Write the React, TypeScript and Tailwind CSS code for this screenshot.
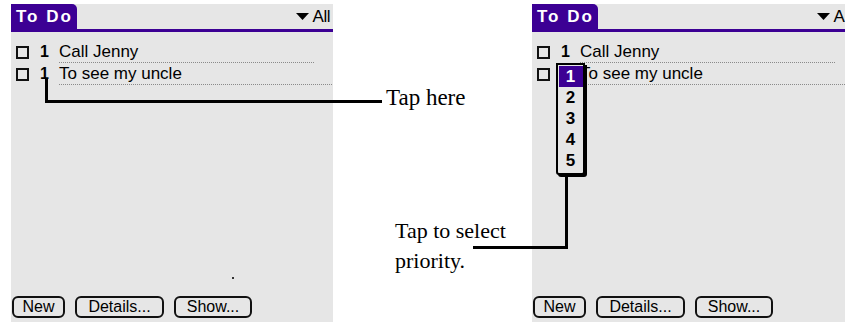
import type { ReactNode } from 'react';

const palmFont = "font-['Liberation_Sans',Arial,sans-serif]";
const serifFont = "font-['Liberation_Serif','Times_New_Roman',serif]";

type Task = { priority: string; text: string; lineTo: string };

const tasks: Task[] = [
  { priority: '1', text: 'Call Jenny', lineTo: 'w-[255px]' },
  { priority: '1', text: 'To see my uncle', lineTo: 'w-[273px]' },
];

function PalmButton({ children, width }: { children: ReactNode; width: string }) {
  return (
    <div
      className={`flex h-[22px] ${width} items-center justify-center rounded-[6px] border-2 border-[#111] text-[16px] leading-none text-black`}
    >
      {children}
    </div>
  );
}

function Checkbox() {
  return <div className="size-[13px] shrink-0 border-2 border-[#111]" />;
}

function PriorityPopup() {
  return (
    <div className="absolute left-[24px] top-[59px] flex w-[29px] flex-col items-center rounded-b-[3px] border-2 border-black bg-[#e6e6e6] pb-[2px] pt-[1px] shadow-[2px_2px_0_#000]">
      <div className="flex h-[21px] w-[24px] items-center justify-center bg-[#3c0094] text-[17px] font-bold text-white">1</div>
      {['2', '3', '4', '5'].map((n) => (
        <div key={n} className="flex h-[21px] w-[24px] items-center justify-center text-[17px] font-bold text-black">
          {n}
        </div>
      ))}
    </div>
  );
}

function PalmScreen({ withPopup = false }: { withPopup?: boolean }) {
  return (
    <div className={`relative flex h-[318px] w-[322px] shrink-0 flex-col bg-[#e6e6e6] ${palmFont}`}>
      {/* title bar */}
      <div className="flex h-[25px] items-stretch">
        <div className="flex w-[66px] items-center rounded-tr-[5px] bg-[#3c0094] pl-[5px] text-[17px] font-bold tracking-[2px] text-white">
          To Do
        </div>
        <div className="flex flex-1 items-center justify-end gap-[4px] pr-[3px] text-[17px] text-black">
          <svg width="13" height="8" viewBox="0 0 13 8" className="mt-[1px]">
            <polygon points="0,0 13,0 6.5,7" fill="#000" />
          </svg>
          <span className="tracking-[-0.5px]">All</span>
        </div>
      </div>
      <div className="h-[3px] bg-[#3c0094]" />

      {/* task rows */}
      <div className="mt-[9px] flex flex-col">
        {tasks.map((t, i) => (
          <div key={i} className="flex h-[22px] items-center">
            <div className="ml-[5px]">
              <Checkbox />
            </div>
            <span className="ml-[11px] w-[19px] text-[16px] font-bold text-black">{t.priority}</span>
            <div className="relative flex flex-col">
              <span className="text-[17px] leading-[20px] text-black">{t.text}</span>
              <div className={`h-0 border-b border-dotted border-[#8a8a8a] ${t.lineTo}`} />
            </div>
          </div>
        ))}
      </div>

      {/* command buttons */}
      <div className="mb-[4px] mt-auto flex items-center gap-[10px] pl-[1px]">
        <PalmButton width="w-[53px]">New</PalmButton>
        <PalmButton width="w-[89px]">Details...</PalmButton>
        <PalmButton width="w-[78px]">Show...</PalmButton>
      </div>

      {withPopup && <PriorityPopup />}
    </div>
  );
}

export default function App() {
  return (
    <div className="relative h-[326px] w-[845px] overflow-hidden bg-white">
      <div className="flex pl-[11px] pt-[4px]">
        <PalmScreen />

        {/* callout labels */}
        <div className={`relative w-[199px] shrink-0 text-black ${serifFont}`}>
          <div className="ml-[53px] mt-[81px] text-[23px] leading-[26px]">Tap here</div>
          <div className="ml-[62px] mt-[105px] text-[22px] leading-[30px]">
            Tap to select
            <br />
            priority.
          </div>
        </div>

        <PalmScreen withPopup />
      </div>

      {/* stray pixel */}
      <div className="absolute left-[232px] top-[277px] size-[2px] bg-[#333]" />

      {/* leader lines */}
      <div className="absolute left-[45px] top-[78px] h-[25px] w-[3px] bg-black" />
      <div className="absolute left-[45px] top-[100px] h-[3px] w-[337px] bg-black" />
      <div className="absolute left-[565px] top-[176px] h-[73px] w-[3px] bg-black" />
      <div className="absolute left-[473px] top-[246px] h-[3px] w-[95px] bg-black" />
    </div>
  );
}
